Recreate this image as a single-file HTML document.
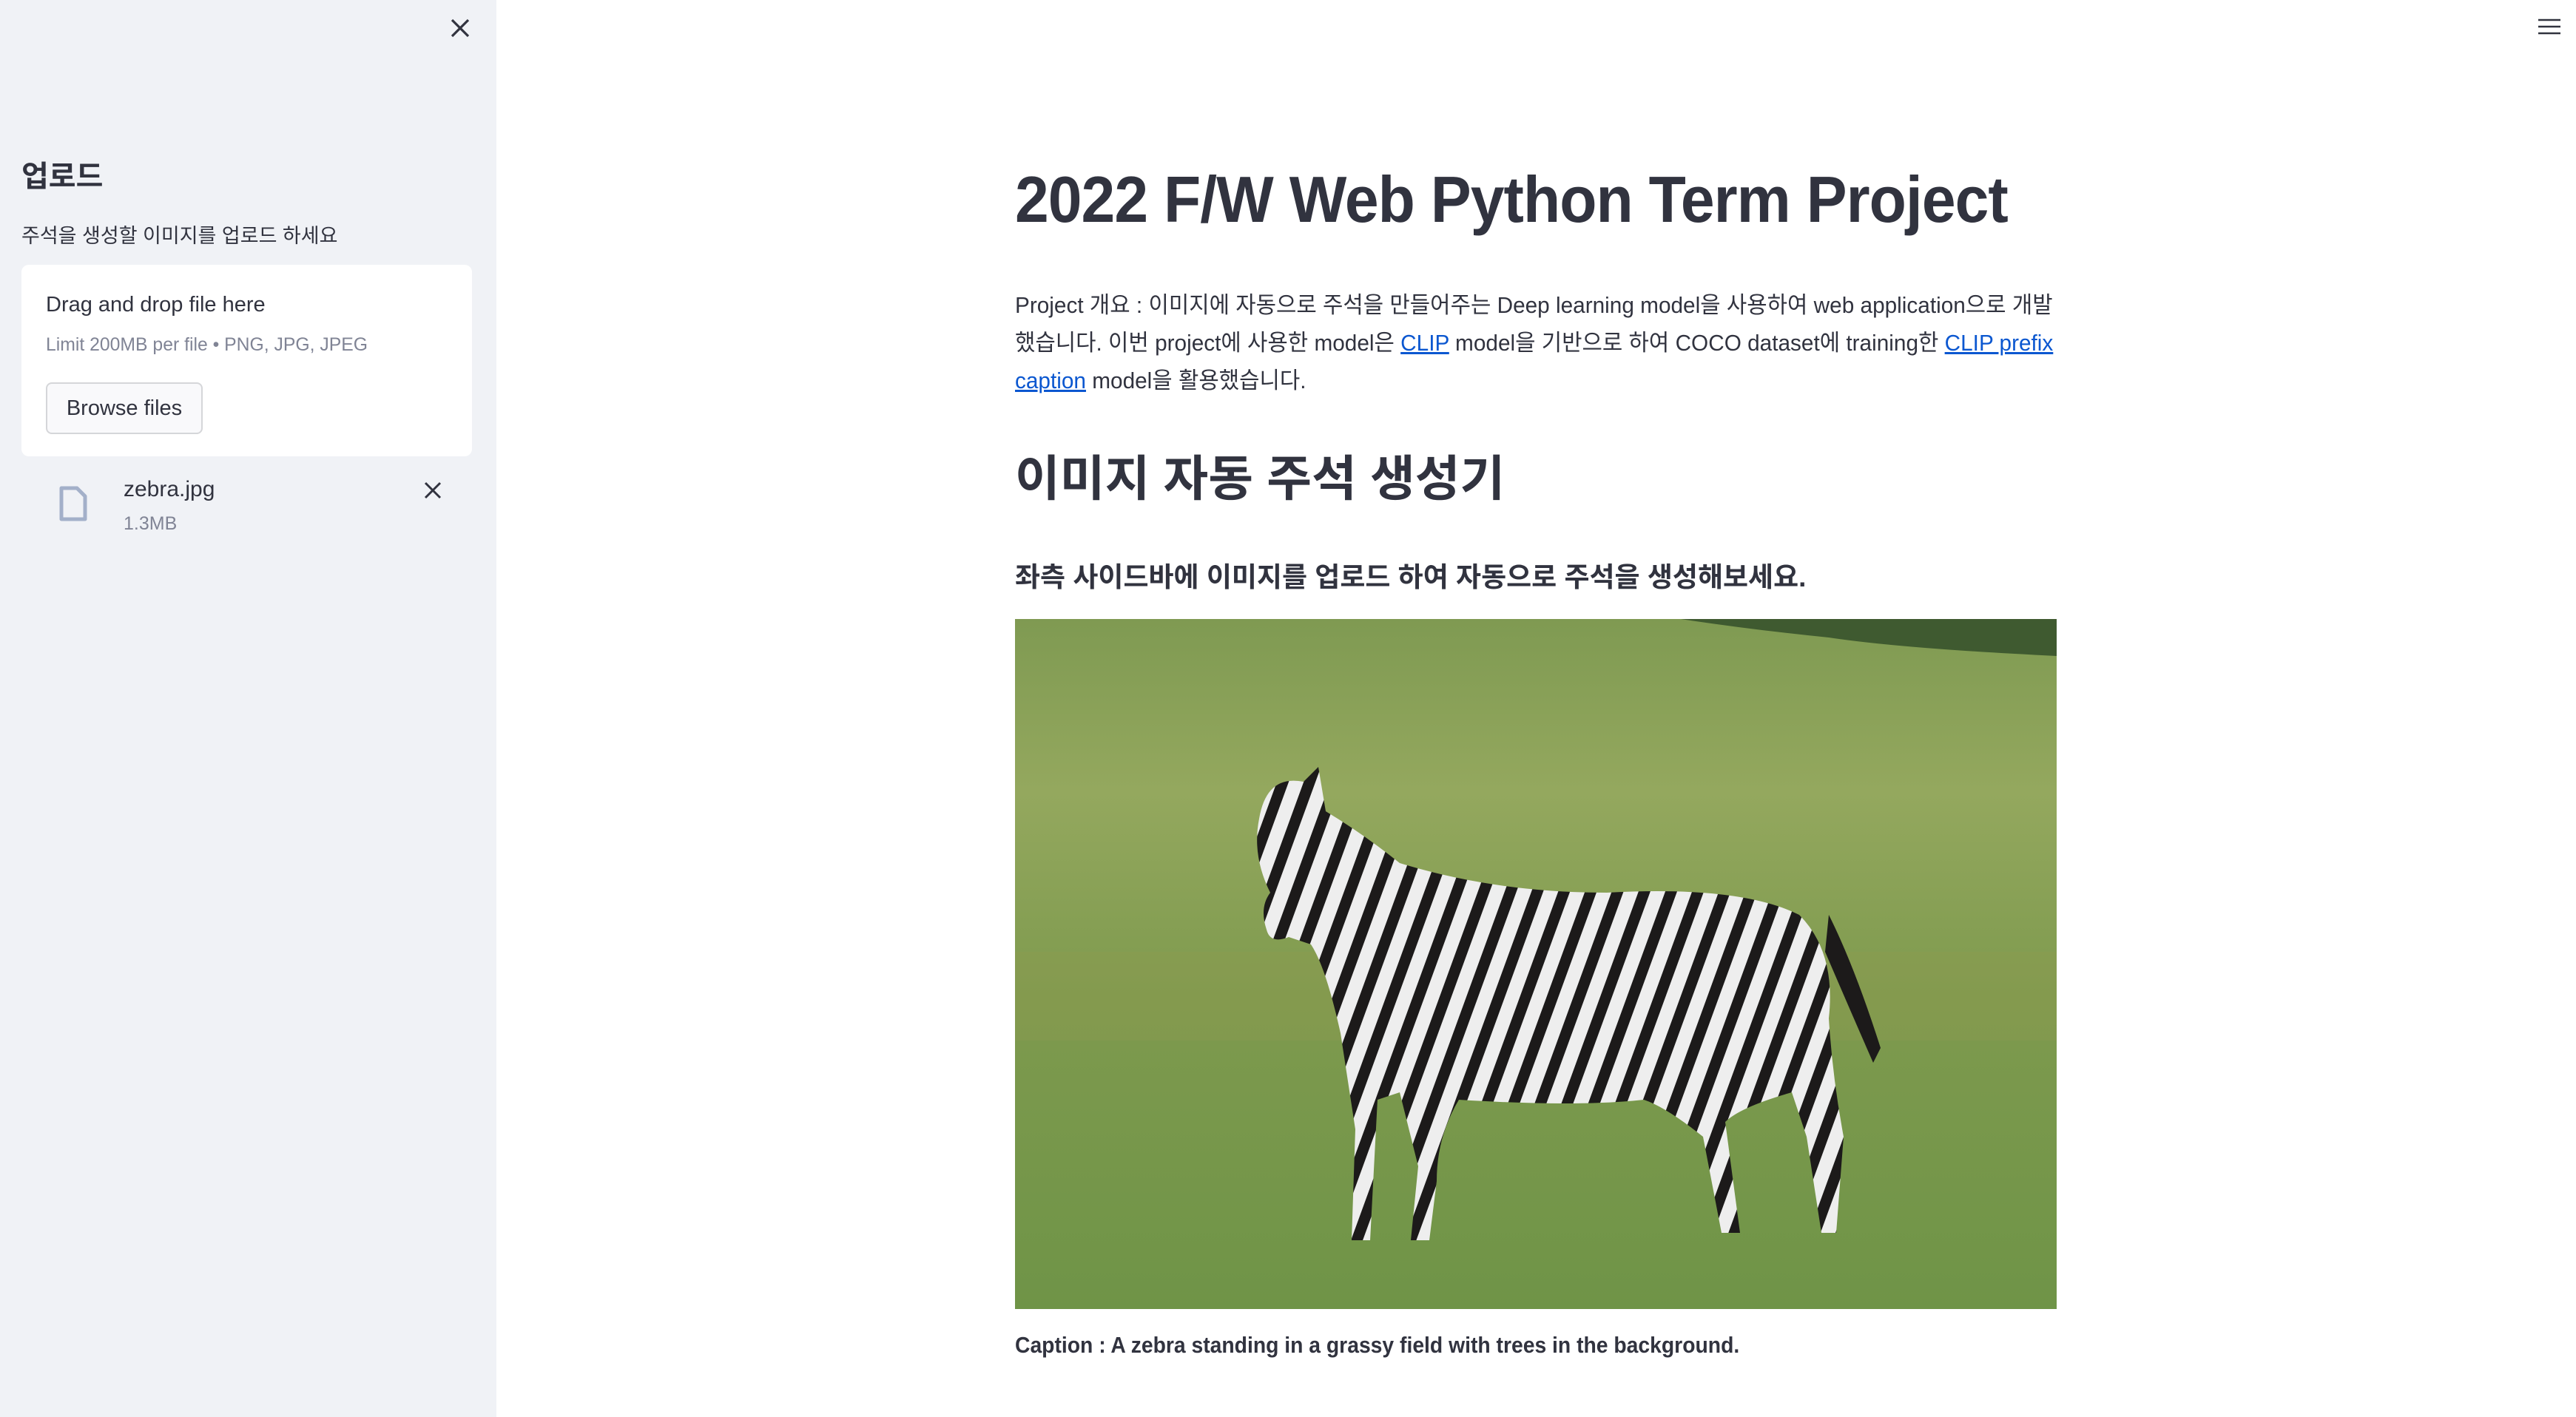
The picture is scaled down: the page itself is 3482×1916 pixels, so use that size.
<!DOCTYPE html>
<html><head><meta charset="utf-8"><style>
*{margin:0;padding:0;box-sizing:border-box}
body{width:3482px;height:1916px;position:relative;background:#fff;font-family:"Liberation Sans","Noto Sans CJK KR",sans-serif;color:#31333f;overflow:hidden}
.sb{position:absolute;left:0;top:0;width:671px;height:1916px;background:#f0f2f6}
.a{position:absolute;white-space:nowrap}
a{color:#0b57d0;text-decoration:underline}
.sq{display:inline-block;transform-origin:left center}
</style></head><body>
<div class="sb">
 <svg class="a" style="left:606px;top:22px" width="32" height="32" viewBox="0 0 32 32"><path d="M5 5L27 27M27 5L5 27" stroke="#31333f" stroke-width="3.2"/></svg>
 <div class="a" style="left:29px;top:206px;font-size:40px;font-weight:600">업로드</div>
 <div class="a" style="left:29px;top:297px;font-size:27px">주석을 생성할 이미지를 업로드 하세요</div>
 <div class="a" style="left:29px;top:358px;width:609px;height:259px;background:#fff;border-radius:10px"></div>
 <div class="a" style="left:62px;top:396px;font-size:29px"><span class="sq" style="transform:scaleX(1)">Drag and drop file here</span></div>
 <div class="a" style="left:62px;top:452px;font-size:25px;color:#808495"><span class="sq" style="transform:scaleX(.99)">Limit 200MB per file • PNG, JPG, JPEG</span></div>
 <div class="a" style="left:62px;top:517px;width:212px;height:70px;border:2px solid #d5d6d9;border-radius:8px;background:#f9f9fb;font-size:29px;line-height:66px;text-align:center"><span class="sq" style="transform:scaleX(1);transform-origin:center">Browse files</span></div>
 <svg class="a" style="left:80px;top:657px" width="38" height="48" viewBox="0 0 38 48"><path d="M3 3H24L35 14V45H3Z" fill="none" stroke="#a3b0c9" stroke-width="5" stroke-linejoin="round"/></svg>
 <div class="a" style="left:167px;top:645px;font-size:30px"><span class="sq" style="transform:scaleX(1)">zebra.jpg</span></div>
 <div class="a" style="left:167px;top:694px;font-size:25px;color:#808495"><span class="sq" style="transform:scaleX(1)">1.3MB</span></div>
 <svg class="a" style="left:572px;top:650px" width="26" height="26" viewBox="0 0 26 26"><path d="M3 3L23 23M23 3L3 23" stroke="#31333f" stroke-width="3"/></svg>
</div>
<svg class="a" style="left:3430px;top:24px" width="32" height="24" viewBox="0 0 32 24"><path d="M1 3H31M1 12H31M1 21H31" stroke="#31333f" stroke-width="2.6"/></svg>
<div class="a" style="left:1372px;top:219px;font-size:88px;font-weight:700;letter-spacing:-1px"><span class="sq" style="transform:scaleX(.934)">2022 F/W Web Python Term Project</span></div>
<div class="a" style="left:1372px;top:387px;font-size:31px;line-height:51px"><span class="sq" style="transform:scaleX(.96)">Project 개요 : 이미지에 자동으로 주석을 만들어주는 Deep learning model을 사용하여 web application으로 개발<br>했습니다. 이번 project에 사용한 model은 <a>CLIP</a> model을 기반으로 하여 COCO dataset에 training한 <a>CLIP prefix</a><br><a>caption</a> model을 활용했습니다.</span></div>
<div class="a" style="left:1372px;top:594px;font-size:66px;font-weight:600"><span class="sq" style="transform:scaleX(1)">이미지 자동 주석 생성기</span></div>
<div class="a" style="left:1372px;top:750px;font-size:37px;font-weight:700"><span class="sq" style="transform:scaleX(1)">좌측 사이드바에 이미지를 업로드 하여 자동으로 주석을 생성해보세요.</span></div>
<svg class="a" style="left:1372px;top:837px" width="1408" height="933" viewBox="0 0 1408 933">
 <defs>
  <linearGradient id="g" x1="0" y1="0" x2="0" y2="1"><stop offset="0" stop-color="#7f9a52"/><stop offset=".25" stop-color="#94a85e"/><stop offset=".55" stop-color="#7e9a4e"/><stop offset="1" stop-color="#6f9447"/></linearGradient>
  <pattern id="st" width="34" height="40" patternUnits="userSpaceOnUse" patternTransform="rotate(20)"><rect width="34" height="40" fill="#eee"/><rect width="15" height="40" fill="#1c1a1a"/></pattern>
 </defs>
 <rect width="1408" height="933" fill="url(#g)"/>
 <path d="M900 0H1408V50Q1200 40 1100 25Q1000 15 900 0Z" fill="#3f5a30"/>
 <rect y="450" width="1408" height="120" fill="#8f9b4f" opacity=".35"/>
 <path d="M330 270Q340 210 390 220L410 200L420 260Q470 290 520 330Q650 370 800 370Q980 360 1060 400Q1110 450 1100 540Q1105 620 1120 700L1110 830L1090 830L1070 700L1050 640Q980 660 960 680L980 830L955 830L930 700Q880 660 850 650Q760 660 600 650Q570 700 570 760L560 840L535 840L545 740L520 640L490 650L480 840L455 840L460 690L440 560Q420 470 400 440L370 430Q345 440 340 420Q330 390 345 370Q320 320 330 270Z" fill="url(#st)"/>
 <path d="M1100 400Q1135 470 1170 580L1160 600Q1125 520 1095 450Z" fill="#1c1a1a"/>
</svg>
<div class="a" style="left:1372px;top:1801px;font-size:31px;font-weight:700"><span class="sq" style="transform:scaleX(.913)">Caption : A zebra standing in a grassy field with trees in the background.</span></div>
</body></html>
